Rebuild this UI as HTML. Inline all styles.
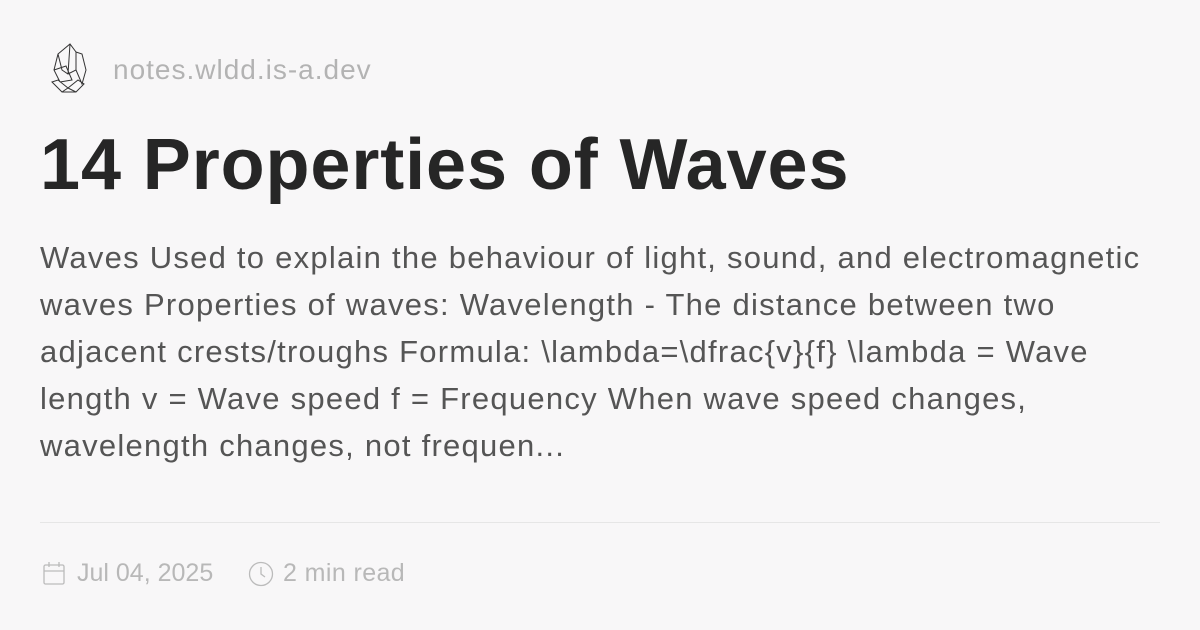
<!DOCTYPE html>
<html><head><meta charset="utf-8"><style>
body{margin:0;width:1200px;height:630px;background:#f8f7f8;font-family:"Liberation Sans",sans-serif;position:relative;overflow:hidden}
.dom{position:absolute;left:113px;top:54px;font-size:28px;letter-spacing:1px;color:#b3b3b3}
h1{position:absolute;left:40px;top:124px;margin:0;font-size:72px;font-weight:bold;color:#262626;letter-spacing:0.9px;white-space:nowrap}
.body{position:absolute;left:40px;top:234px;font-size:31px;line-height:47px;letter-spacing:1.25px;color:#555;white-space:nowrap}
.hr{position:absolute;left:40px;width:1120px;top:522px;height:1px;background:#e6e6e6}
.meta{position:absolute;top:559px;font-size:25px;color:#b8b8b8}
</style></head><body>
<svg style="position:absolute;left:48px;top:42px" width="40" height="52" viewBox="0 0 40 52" fill="none" stroke="#333" stroke-width="1">
<path d="M10 12 L22 2 L28 10 L28 28 L20 32 L14 28 Z M22 2 L20 32 M28 10 L34 12 L38 28 L34 42 L28 28 M10 12 L6 28 L12 40 M6 28 L18 24 L24 38 L12 40 M4 40 L14 50 L28 50 L36 42 L30 38 L20 46 L10 38 Z M14 50 L20 46 L28 50"/>
</svg>
<div class="dom">notes.wldd.is-a.dev</div>
<h1>14 Properties of Waves</h1>
<div class="body">Waves Used to explain the behaviour of light, sound, and electromagnetic<br>waves Properties of waves: Wavelength - The distance between two<br>adjacent crests/troughs Formula: \lambda=\dfrac{v}{f} \lambda = Wave<br>length v = Wave speed f = Frequency When wave speed changes,<br>wavelength changes, not frequen...</div>
<div class="hr"></div>
<svg style="position:absolute;left:43px;top:561px" width="22" height="24" viewBox="0 0 22 24" fill="none" stroke="#bbb" stroke-width="1.3"><rect x="1" y="4" width="20" height="19" rx="1.5"/><path d="M1 10H21M6 1V6M16 1V6"/></svg>
<div class="meta" style="left:77px">Jul 04, 2025</div>
<svg style="position:absolute;left:248px;top:561px" width="26" height="26" viewBox="0 0 26 26" fill="none" stroke="#bbb" stroke-width="1.3"><circle cx="13" cy="13" r="11.5"/><path d="M13 6V13L17 16"/></svg>
<div class="meta" style="left:283px;letter-spacing:0.4px">2 min read</div>
</body></html>
